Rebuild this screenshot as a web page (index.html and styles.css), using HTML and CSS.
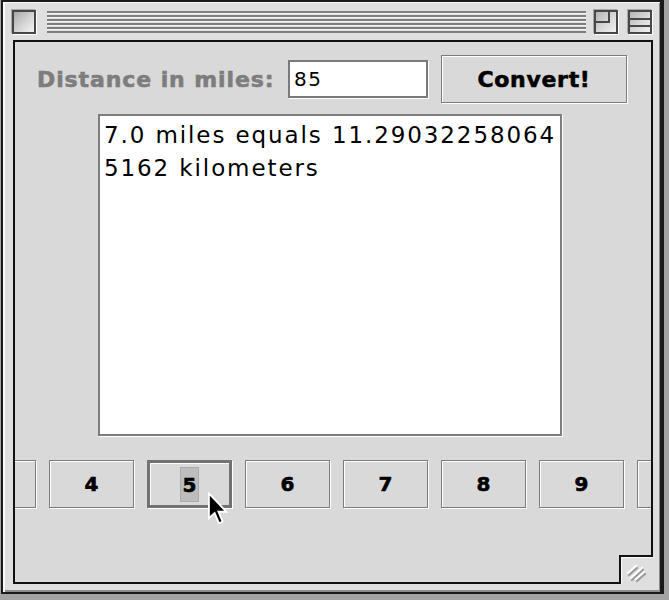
FILE: index.html
```html
<!DOCTYPE html>
<html>
<head>
<meta charset="utf-8">
<title>Converter</title>
<link rel="stylesheet" href="styles.css">
</head>
<body>
<div class="window">
  <div class="titlebar">
    <div class="box close"></div>
    <div class="stripes"></div>
    <div class="box zoom"><span class="zoom-inner"></span></div>
    <div class="box shade"><span class="shade-lines"></span></div>
  </div>
  <div class="content">
    <div class="row">
      <label class="label">Distance in miles:</label>
      <div class="field">85</div>
      <button class="btn convert">Convert!</button>
    </div>
    <div class="output">
      <div>7.0 miles equals 11.29032258064</div>
      <div>5162 kilometers</div>
    </div>
    <div class="strip">
      <button class="btn num first" aria-label="3"></button>
      <button class="btn num">4</button>
      <button class="btn num focused"><span class="hl">5</span></button>
      <button class="btn num">6</button>
      <button class="btn num">7</button>
      <button class="btn num">8</button>
      <button class="btn num">9</button>
      <button class="btn num" aria-label="10"></button>
    </div>
    <div class="grow">
      <svg width="28" height="24" viewBox="0 0 28 24">
        <g stroke-width="2" stroke-linecap="square">
          <line x1="5" y1="13" x2="13" y2="6" stroke="#ffffff"/>
          <line x1="6" y1="15" x2="14" y2="8" stroke="#9a9a9a"/>
          <line x1="8" y1="18" x2="19" y2="8" stroke="#ffffff"/>
          <line x1="9" y1="20" x2="20" y2="10" stroke="#9a9a9a"/>
          <line x1="13" y1="19" x2="21" y2="12" stroke="#ffffff"/>
          <line x1="14" y1="21" x2="22" y2="14" stroke="#9a9a9a"/>
        </g>
      </svg>
    </div>
    <svg class="cursor" width="22" height="34" viewBox="0 0 12 18">
      <polygon points="0.5,0.5 0.5,14 3.6,11.2 6,16.8 8,15.9 5.7,10.5 10,10.5" fill="#000" stroke="#fff" stroke-width="1"/>
    </svg>
  </div>
</div>
</body>
</html>
```
FILE: styles.css
```css
html, body {
  margin: 0;
  padding: 0;
}
body {
  background: #a3a3a3;
  width: 669px;
  height: 600px;
  overflow: hidden;
}
.window {
  margin-left: 1px;
  width: 663px;
  height: 594px;
  box-sizing: border-box;
  border-style: solid;
  border-color: #1a1a1a;
  border-width: 2px 4px 2px 2px;
  padding: 0 7px 8px 10px;
  background: #dfdfdf;
  box-shadow: inset 2px 1px 0 #fafafa, inset -1px -2px 0 #8c8c8c;
  display: flex;
  flex-direction: column;
}
.titlebar {
  height: 38px;
  flex: none;
  margin: 0 -7px 0 -10px;
  padding: 1px 8px 0 9px;
  box-sizing: border-box;
  display: flex;
  align-items: center;
}
.box {
  width: 24px;
  height: 24px;
  box-sizing: border-box;
  border: 2px solid #474747;
  flex: none;
  box-shadow: 1px 1px 0 #ffffff, -1px -1px 0 #a8a8a8;
}
.close {
  background: linear-gradient(135deg, #a9a9a9 0%, #d6d6d6 55%, #f2f2f2 100%);
}
.stripes {
  flex: 1;
  height: 22px;
  margin: 0 8px 0 11px;
  background: repeating-linear-gradient(to bottom, #7e7e7e 0 2px, #f6f6f6 2px 3px, #dfdfdf 3px 4px);
}
.zoom {
  background: linear-gradient(135deg, #b5b5b5 0%, #dcdcdc 60%, #f0f0f0 100%);
}
.zoom-inner {
  display: block;
  width: 12px;
  height: 9px;
  border-right: 2px solid #474747;
  border-bottom: 2px solid #474747;
}
.shade {
  margin-left: 10px;
  background: linear-gradient(135deg, #b5b5b5 0%, #dcdcdc 60%, #f0f0f0 100%);
}
.shade-lines {
  display: block;
  margin-top: 6px;
  height: 5px;
  border-top: 2px solid #474747;
  border-bottom: 2px solid #474747;
}
.content {
  position: relative;
  flex: 1;
  border: 2px solid #111;
  background: #d9d9d9;
  display: flex;
  flex-direction: column;
  min-height: 0;
}
.row {
  display: flex;
  align-items: center;
  margin-top: 13px;
  padding-left: 22px;
  height: 48px;
}
.label {
  width: 251px;
  flex: none;
  font-family: "DejaVu Sans", sans-serif;
  font-weight: bold;
  font-size: 22px;
  letter-spacing: 0.9px;
  color: #7d7d7d;
  -webkit-text-stroke: 0.6px #7d7d7d;
  white-space: nowrap;
}
.field {
  width: 140px;
  height: 38px;
  box-sizing: border-box;
  border: 2px solid #7a7a7a;
  box-shadow: 1px 1px 0 #ffffff;
  background: #ffffff;
  padding-left: 4px;
  font-family: "DejaVu Sans", sans-serif;
  font-size: 20px;
  letter-spacing: 1.5px;
  line-height: 34px;
  color: #000;
}
.btn {
  margin: 0;
  padding: 0;
  box-sizing: border-box;
  border: 1px solid #7c7c7c;
  box-shadow: inset 1px 1px 0 #ffffff, 1px 1px 0 #ffffff;
  background: #d9d9d9;
  color: #000;
  font-family: "DejaVu Sans", sans-serif;
  font-weight: bold;
  border-radius: 0;
  -webkit-text-stroke: 0.6px #000;
}
.convert {
  margin-left: 13px;
  width: 186px;
  height: 48px;
  font-size: 22px;
  letter-spacing: 0.7px;
}
.output {
  margin: 11px 0 0 83px;
  width: 464px;
  height: 322px;
  flex: none;
  box-sizing: border-box;
  border: 2px solid #7d7d7d;
  box-shadow: 1px 1px 0 #ffffff;
  background: #ffffff;
  padding: 3px 0 0 4px;
  font-family: "DejaVu Sans", sans-serif;
  font-size: 23px;
  letter-spacing: 1.9px;
  line-height: 33px;
  white-space: nowrap;
  overflow: hidden;
  color: #000;
}
.strip {
  margin-top: 24px;
  display: flex;
  gap: 13px;
  overflow: hidden;
  padding-bottom: 2px;
}
.num {
  flex: none;
  width: 85px;
  height: 48px;
  font-size: 20px;
}
.first {
  margin-left: -64px;
}
.focused {
  border: 3px solid #727272;
  box-shadow: inset 1px 1px 0 #ffffff, 1px 1px 0 #ffffff;
}
.hl {
  display: inline-block;
  background: #bdbdbd;
  border: 1px solid #ababab;
  padding: 5px 2px 4px;
  line-height: 24px;
}
.grow {
  position: absolute;
  right: -2px;
  bottom: -2px;
  width: 34px;
  height: 29px;
  box-sizing: border-box;
  border-top: 2px solid #111;
  border-left: 2px solid #111;
  background: #dfdfdf;
  box-shadow: inset 1px 1px 0 #fafafa;
}
.grow svg {
  display: block;
  margin: 3px 0 0 2px;
}
.cursor {
  position: absolute;
  left: 193px;
  top: 450px;
}
```
